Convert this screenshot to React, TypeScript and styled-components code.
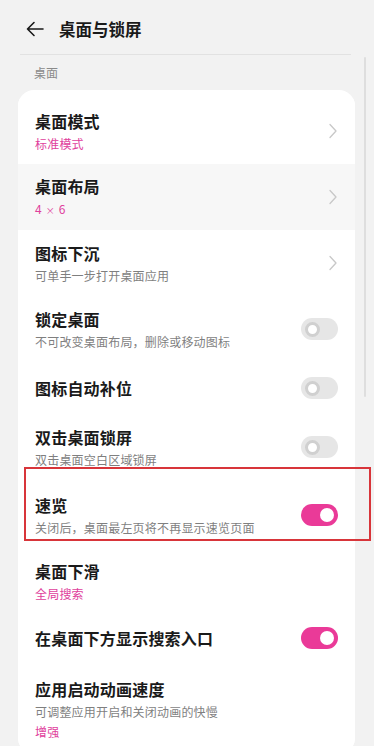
import React from "react";
import styled, { createGlobalStyle } from "styled-components";

const Global = createGlobalStyle`
  html, body { margin: 0; padding: 0; background: #f2f2f2; }
  body { font-family: "Noto Sans CJK SC", "Noto Sans", sans-serif; }
  * { box-sizing: border-box; }
`;

const Page = styled.div`
  position: relative;
  width: 374px;
  height: 746px;
  overflow: hidden;
  background: #f2f2f2;
  padding: 0 19px 0 18px;
`;

const Header = styled.div`
  display: flex;
  align-items: center;
  height: 55px;
  padding: 4px 0 0 6px;
  gap: 15px;
  border-bottom: 1px solid #e2e2e2;
  margin: 0 4px 0 2px;
`;

const HeaderTitle = styled.div`
  font-size: 16.5px;
  font-weight: 700;
  color: #1a1a1a;
  letter-spacing: 0;
`;

const SectionLabel = styled.div`
  font-size: 12px;
  color: #8a8a8a;
  padding: 9px 0 0 16px;
  height: 35px;
  line-height: 18px;
`;

const Card = styled.div`
  background: #ffffff;
  border-radius: 16px;
  padding-top: 8px;
  overflow: hidden;
`;

const Row = styled.div<{ $h: number; $pressed?: boolean; $top?: boolean }>`
  display: flex;
  align-items: ${(p) => (p.$top ? "flex-start" : "center")};
  justify-content: space-between;
  height: ${(p) => p.$h}px;
  padding: ${(p) => (p.$top ? "13px" : "0")} 17px 0 17px;
  background: ${(p) => (p.$pressed ? "#f7f7f7" : "#ffffff")};
`;

const TextCol = styled.div`
  display: flex;
  flex-direction: column;
  gap: 2px;
`;

const Title = styled.div`
  font-size: 16px;
  font-weight: 700;
  line-height: 24px;
  color: #1a1a1a;
  letter-spacing: 0.2px;
`;

const Sub = styled.div<{ $pink?: boolean }>`
  font-size: 12px;
  line-height: 18px;
  color: ${(p) => (p.$pink ? "#e0409c" : "#7f7f7f")};
  letter-spacing: 0.2px;
`;

const Small = styled.span`
  font-size: 9px;
  margin: 0 1px;
`;

const Toggle = styled.div<{ $on?: boolean }>`
  position: relative;
  width: 37px;
  height: 22px;
  border-radius: 11px;
  background: ${(p) => (p.$on ? "#ea3a98" : "#e6e6e6")};
  flex-shrink: 0;
`;

const Knob = styled.div<{ $on?: boolean }>`
  position: absolute;
  top: ${(p) => (p.$on ? "4px" : "3.5px")};
  left: ${(p) => (p.$on ? "19px" : "3.5px")};
  width: ${(p) => (p.$on ? "14px" : "15px")};
  height: ${(p) => (p.$on ? "14px" : "15px")};
  border-radius: 50%;
  background: #ffffff;
  border: ${(p) => (p.$on ? "none" : "3px solid #d0d0d0")};
`;

const Scrollbar = styled.div`
  position: absolute;
  left: 364px;
  top: 57px;
  width: 2px;
  height: 340px;
  background: #dedede;
  border-radius: 1px;
`;

const Highlight = styled.div`
  position: absolute;
  left: 24px;
  top: 467px;
  width: 347px;
  height: 74px;
  border: 2px solid #d8353a;
`;

const Chevron = () => (
  <svg width="10" height="16" viewBox="0 0 10 16" fill="none">
    <path d="M2 1.5 L8 8 L2 14.5" stroke="#c8c8c8" strokeWidth="1.3" strokeLinecap="round" strokeLinejoin="round" />
  </svg>
);

const BackArrow = () => (
  <svg width="18" height="16" viewBox="0 0 18 16" fill="none">
    <path d="M17 8 H1.5 M8 1.5 L1.5 8 L8 14.5" stroke="#1a1a1a" strokeWidth="1.6" strokeLinecap="round" strokeLinejoin="round" />
  </svg>
);

type Item = {
  title: string;
  sub?: React.ReactNode;
  subPink?: boolean;
  extra?: string;
  h: number;
  kind: "chevron" | "off" | "on" | "none";
  pressed?: boolean;
};

const items: Item[] = [
  { title: "桌面模式", sub: "标准模式", subPink: true, h: 66, kind: "chevron" },
  {
    title: "桌面布局",
    sub: (
      <>
        4 <Small>×</Small> 6
      </>
    ),
    subPink: true,
    h: 66,
    kind: "chevron",
    pressed: true,
  },
  { title: "图标下沉", sub: "可单手一步打开桌面应用", h: 66, kind: "chevron" },
  { title: "锁定桌面", sub: "不可改变桌面布局，删除或移动图标", h: 66, kind: "off" },
  { title: "图标自动补位", h: 52, kind: "off" },
  { title: "双击桌面锁屏", sub: "双击桌面空白区域锁屏", h: 66, kind: "off" },
  { title: "速览", sub: "关闭后，桌面最左页将不再显示速览页面", h: 70, kind: "on" },
  { title: "桌面下滑", sub: "全局搜索", subPink: true, h: 62, kind: "none" },
  { title: "在桌面下方显示搜索入口", h: 52, kind: "on" },
  { title: "应用启动动画速度", sub: "可调整应用开启和关闭动画的快慢", extra: "增强", h: 90, kind: "none" },
];

export default function App() {
  return (
    <>
      <Global />
      <Page>
        <Header>
          <BackArrow />
          <HeaderTitle>桌面与锁屏</HeaderTitle>
        </Header>
        <SectionLabel>桌面</SectionLabel>
        <Card>
          {items.map((it) => (
            <Row key={it.title} $h={it.h} $pressed={it.pressed} $top={!!it.extra}>
              <TextCol>
                <Title>{it.title}</Title>
                {it.sub && <Sub $pink={it.subPink}>{it.sub}</Sub>}
                {it.extra && <Sub $pink>{it.extra}</Sub>}
              </TextCol>
              {it.kind === "chevron" && <Chevron />}
              {(it.kind === "off" || it.kind === "on") && (
                <Toggle $on={it.kind === "on"}>
                  <Knob $on={it.kind === "on"} />
                </Toggle>
              )}
            </Row>
          ))}
        </Card>
        <Scrollbar />
        <Highlight />
      </Page>
    </>
  );
}
